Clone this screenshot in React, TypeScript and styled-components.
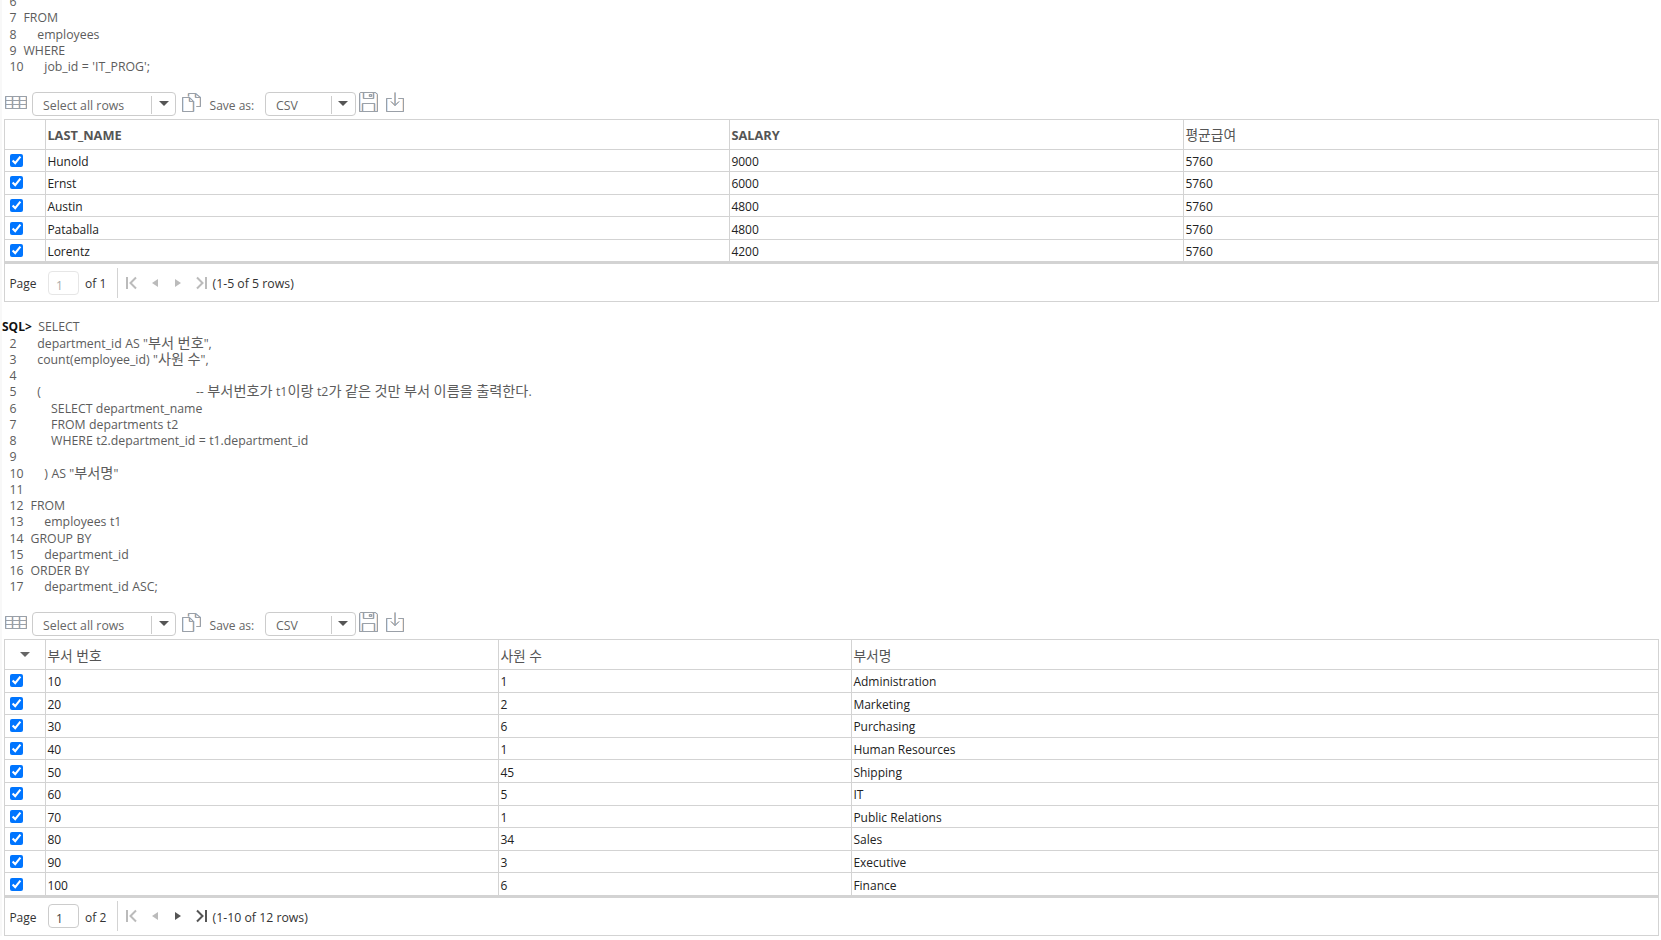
import React from "react";
import styled, { createGlobalStyle } from "styled-components";

const Global = createGlobalStyle`
  html, body { margin: 0; padding: 0; background: #fff; height: 940px; overflow: hidden; }
  body { font-family: "Open Sans", "Noto Sans CJK KR", sans-serif; font-size: 12px; color: #333; }
`;

const Page = styled.main`
  margin-top: -6px;
  border-left: 2px solid #f8f8f8;
  display: flex;
  flex-direction: column;
`;

const Section = styled.section`
  display: flex;
  flex-direction: column;
`;

const Code = styled.div<{ $before?: number; $after: number }>`
  margin-top: ${(p) => p.$before ?? 0}px;
  margin-bottom: ${(p) => p.$after}px;
`;

const CodeLine = styled.div`
  height: 16.25px;
  line-height: 16.25px;
  padding-left: 7.6px;
  white-space: pre;
  color: #5c5c5c;
  font-size: 12.3px;
  word-spacing: 0.25px;
`;

const PromptLine = styled(CodeLine)`
  padding-left: 0;
`;

const Prompt = styled.b`
  color: #111;
  font-weight: 700;
  font-size: 12px;
  margin-right: 3px;
`;

const Hangul = styled.span`
  font-size: 14.2px;
  line-height: 0;
`;

const Toolbar = styled.div`
  display: flex;
  align-items: center;
  height: 24px;
  padding-left: 3px;
  margin-bottom: 3px;
  color: #666;
`;

const SelectBox = styled.div<{ $w: number; $l?: number }>`
  box-sizing: border-box;
  display: flex;
  align-items: center;
  width: ${(p) => p.$w}px;
  height: 24px;
  margin-left: ${(p) => p.$l ?? 0}px;
  border: 1px solid #ccc;
  border-radius: 4px;
  background: #fff;
`;

const SelectText = styled.span`
  flex: 1;
  padding: 3px 0 0 10px;
  font-size: 12.3px;
`;

const ArrowCell = styled.span`
  box-sizing: border-box;
  width: 24px;
  height: 18px;
  margin-top: 2px;
  border-left: 1px solid #ccc;
  display: flex;
  align-items: center;
  justify-content: center;
`;

const Caret = styled.i`
  display: block;
  width: 0;
  height: 0;
  border-left: 5px solid transparent;
  border-right: 5px solid transparent;
  border-top: 5px solid #555;
  margin-top: -4px;
`;

const SaveLabel = styled.span`
  width: 55.4px;
  margin-left: 8.6px;
  padding-top: 3px;
`;

const ToolIcon = styled.svg<{ $l: number }>`
  display: block;
  flex: none;
  margin-left: ${(p) => p.$l}px;
  margin-top: -4px;
`;

const Grid = styled.div`
  margin-left: 2.4px;
  width: 1654.6px;
  box-sizing: border-box;
  border: 1px solid #d3d3d3;
`;

const Row = styled.div<{ $cols: string; $head?: boolean }>`
  display: grid;
  grid-template-columns: ${(p) => p.$cols};
  height: ${(p) => (p.$head ? "29.5px" : "22.6px")};
  box-sizing: border-box;
  border-bottom: 1px solid #d3d3d3;
`;

const Cell = styled.div`
  display: flex;
  align-items: center;
  padding: 2px 0 0 1px;
  border-right: 1px solid #d3d3d3;
  color: #222;
  overflow: hidden;
  &:last-child { border-right: 0; }
`;

const HeadCell = styled(Cell)<{ $bold?: boolean }>`
  padding-top: ${(p) => (p.$bold ? "2px" : "0")};
  color: #555;
  font-weight: ${(p) => (p.$bold ? 700 : 400)};
  font-size: ${(p) => (p.$bold ? "12.8px" : "13.8px")};
`;

const CheckCell = styled(Cell)`
  padding: 0;
  justify-content: center;
`;

const Check = styled.input`
  width: 13px;
  height: 13px;
  margin: 0 18px 0 0;
`;

const SortCaret = styled(Caret)`
  border-top-color: #666;
  margin: -1px 0 0 -1px;
`;

const SortCell = styled(Cell)`
  padding: 0;
  justify-content: center;
`;

const Footer = styled.div`
  display: flex;
  align-items: center;
  height: 37px;
  border-top: 2px solid #d3d3d3;
  box-sizing: content-box;
  padding-left: 4px;
  color: #333;
`;

const PagerText = styled.span`
  padding-top: 2px;
`;

const PageBox = styled.span<{ $off?: boolean }>`
  box-sizing: border-box;
  width: 31px;
  height: 24px;
  margin: 0 6px 0 11.5px;
  padding: 5px 0 0 7px;
  border: 1px solid ${(p) => (p.$off ? "#e6e6e6" : "#ccc")};
  border-radius: 4px;
  color: ${(p) => (p.$off ? "#aaa" : "#444")};
`;

const OfText = styled(PagerText)`
  width: 31.5px;
`;

const PagerRule = styled.span`
  width: 1px;
  height: 30px;
  background: #d3d3d3;
  margin-right: 8px;
`;

const RangeText = styled(PagerText)`
  font-size: 12.3px;
`;

const PagerIcon = styled.svg<{ $w: number; $r: number }>`
  display: block;
  flex: none;
  width: ${(p) => p.$w}px;
  height: 14px;
  margin-right: ${(p) => p.$r}px;
`;

const Fringe = ({ children }: { children: React.ReactNode }) => (
  <>
    <g stroke="#e7b98f" transform="translate(-0.5 0)" opacity="0.75">{children}</g>
    <g stroke="#8db8e6" transform="translate(0.5 0)" opacity="0.75">{children}</g>
    <g stroke="#9aa0a8">{children}</g>
  </>
);

const TableGlyph = () => (
  <ToolIcon $l={0} width="22" height="15" viewBox="0 0 22 15" fill="none" strokeWidth="1">
    <Fringe>
      <path d="M.5 1.5h21v12H.5zM.5 5.5h21M.5 9.5h21M7.5 1.5v12M14.5 1.5v12" />
    </Fringe>
  </ToolIcon>
);

const CopyGlyph = () => (
  <ToolIcon $l={6} width="19" height="20" viewBox="0 0 19 20" fill="none" strokeWidth="1">
    <Fringe>
      <path d="M6.5 4.5V1.5h7l5 4v9h-4M13.5 1.5v4h5M.5 5.5h7l4 4v10H.5zM7.5 5.5v4h4" />
    </Fringe>
  </ToolIcon>
);

const SaveGlyph = () => (
  <ToolIcon $l={3.3} width="19" height="20" viewBox="0 0 19 20" fill="none" strokeWidth="1">
    <Fringe>
      <path d="M1.5.5h15l2 2v17H.5V1.5zM4.5.5v6h10v-6M10.5 2.5h2v2h-2zM3.5 19.5v-8h12v8" />
    </Fringe>
  </ToolIcon>
);

const DownloadGlyph = () => (
  <ToolIcon $l={8} width="18" height="20" viewBox="0 0 18 20" fill="none" strokeWidth="1">
    <Fringe>
      <path d="M5.5 6.5H.5v13h17v-13h-5M9 .5v13M5 9.5l4 4 4-4" />
    </Fringe>
  </ToolIcon>
);

const First = ({ c }: { c: string }) => (
  <PagerIcon $w={11} $r={15} viewBox="0 0 11 14" fill="none" stroke={c} strokeWidth="2">
    <path d="M1 1v12M10 1.5 4.5 7l5.5 5.5" />
  </PagerIcon>
);
const Prev = ({ c }: { c: string }) => (
  <PagerIcon $w={6} $r={17} viewBox="0 0 6 14" fill={c}>
    <path d="M6 3v8L0 7z" />
  </PagerIcon>
);
const Next = ({ c }: { c: string }) => (
  <PagerIcon $w={6} $r={15} viewBox="0 0 6 14" fill={c}>
    <path d="M0 3v8l6-4z" />
  </PagerIcon>
);
const Last = ({ c }: { c: string }) => (
  <PagerIcon $w={11} $r={6} viewBox="0 0 11 14" fill="none" stroke={c} strokeWidth="2">
    <path d="M1 1.5 6.5 7 1 12.5M10 1v12" />
  </PagerIcon>
);

const ResultToolbar = () => (
  <Toolbar>
    <TableGlyph />
    <SelectBox $w={144} $l={5}>
      <SelectText>Select all rows</SelectText>
      <ArrowCell><Caret /></ArrowCell>
    </SelectBox>
    <CopyGlyph />
    <SaveLabel>Save as:</SaveLabel>
    <SelectBox $w={90.7}>
      <SelectText>CSV</SelectText>
      <ArrowCell><Caret /></ArrowCell>
    </SelectBox>
    <SaveGlyph />
    <DownloadGlyph />
  </Toolbar>
);

type TableProps = {
  cols: string;
  heads: { label: string; bold?: boolean }[];
  rows: string[][];
  sort?: boolean;
  of: string;
  range: string;
  more?: boolean;
};

const Result = ({ cols, heads, rows, sort, of, range, more }: TableProps) => (
  <Grid>
    <Row $cols={cols} $head>
      {sort ? <SortCell><SortCaret /></SortCell> : <Cell />}
      {heads.map((h) => (
        <HeadCell key={h.label} $bold={h.bold}>{h.label}</HeadCell>
      ))}
    </Row>
    {rows.map((r) => (
      <Row key={r[0]} $cols={cols}>
        <CheckCell><Check type="checkbox" checked readOnly /></CheckCell>
        {r.map((v, i) => <Cell key={i}>{v}</Cell>)}
      </Row>
    ))}
    <Footer>
      <PagerText>Page</PagerText>
      <PageBox $off={!more}>1</PageBox>
      <OfText>{of}</OfText>
      <PagerRule />
      <First c="#bbb" />
      <Prev c="#bbb" />
      <Next c={more ? "#555" : "#bbb"} />
      <Last c={more ? "#555" : "#bbb"} />
      <RangeText>{range}</RangeText>
    </Footer>
  </Grid>
);

const withHangul = (text: string) =>
  text.split(/([가-힣]+)/).map((part, i) =>
    i % 2 === 1 ? <Hangul key={i}>{part}</Hangul> : part,
  );

const block1 = [
  "6",
  "7  FROM",
  "8      employees",
  "9  WHERE",
  "10      job_id = 'IT_PROG';",
];

const block2 = [
  "2      department_id AS \"부서 번호\",",
  "3      count(employee_id) \"사원 수\",",
  "4",
  "5      (                                             -- 부서번호가 t1이랑 t2가 같은 것만 부서 이름을 출력한다.",
  "6          SELECT department_name",
  "7          FROM departments t2",
  "8          WHERE t2.department_id = t1.department_id",
  "9",
  "10      ) AS \"부서명\"",
  "11",
  "12  FROM",
  "13      employees t1",
  "14  GROUP BY",
  "15      department_id",
  "16  ORDER BY",
  "17      department_id ASC;",
];

const rows1 = [
  ["Hunold", "9000", "5760"],
  ["Ernst", "6000", "5760"],
  ["Austin", "4800", "5760"],
  ["Pataballa", "4800", "5760"],
  ["Lorentz", "4200", "5760"],
];

const rows2 = [
  ["10", "1", "Administration"],
  ["20", "2", "Marketing"],
  ["30", "6", "Purchasing"],
  ["40", "1", "Human Resources"],
  ["50", "45", "Shipping"],
  ["60", "5", "IT"],
  ["70", "1", "Public Relations"],
  ["80", "34", "Sales"],
  ["90", "3", "Executive"],
  ["100", "6", "Finance"],
];

export default function App() {
  return (
    <Page>
      <Global />
      <Section>
        <Code $after={16.75}>
          {block1.map((l) => <CodeLine key={l}>{l}</CodeLine>)}
        </Code>
        <ResultToolbar />
        <Result
          cols="41px 684px 454px 1fr"
          heads={[{ label: "LAST_NAME", bold: true }, { label: "SALARY", bold: true }, { label: "평균급여" }]}
          rows={rows1}
          of="of 1"
          range="(1-5 of 5 rows)"
        />
      </Section>
      <Section>
        <Code $before={17} $after={16.75}>
          <PromptLine><Prompt>SQL&gt;</Prompt> SELECT</PromptLine>
          {block2.map((l) => <CodeLine key={l}>{withHangul(l)}</CodeLine>)}
        </Code>
        <ResultToolbar />
        <Result
          cols="41px 453px 353px 1fr"
          heads={[{ label: "부서 번호" }, { label: "사원 수" }, { label: "부서명" }]}
          rows={rows2}
          sort
          more
          of="of 2"
          range="(1-10 of 12 rows)"
        />
      </Section>
    </Page>
  );
}
